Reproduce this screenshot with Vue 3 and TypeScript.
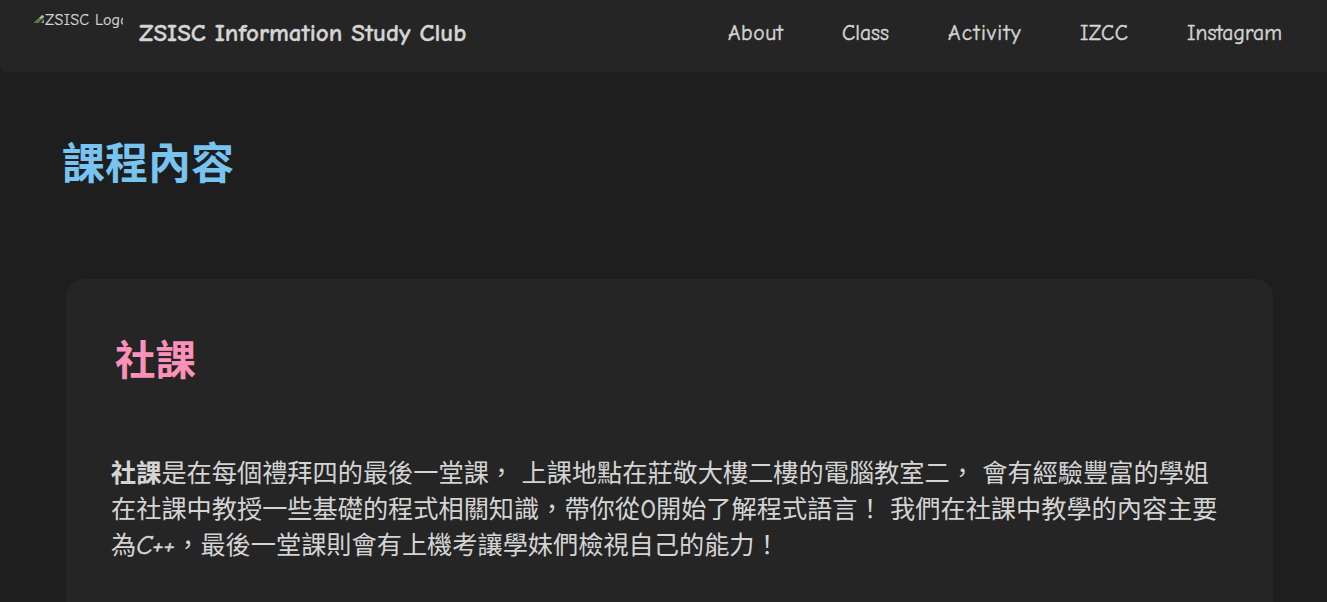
<script setup lang="ts">
interface NavLink {
  id: string
  label: string
}

const links: NavLink[] = [
  { id: 'about', label: 'About' },
  { id: 'class', label: 'Class' },
  { id: 'activity', label: 'Activity' },
  { id: 'izcc', label: 'IZCC' },
  { id: 'instagram', label: 'Instagram' },
]
</script>

<template>
  <div class="page">
    <header class="navbar">
      <div class="brand">
        <div class="logo">
          <svg class="logo-icon" viewBox="0 0 11 9" aria-hidden="true">
            <path d="M0 8 8 0l2 1v3L5 8z" fill="#a9b7b9" />
            <path d="M0 8 5 3l3 1-4 4z" fill="#587f32" />
            <path d="M4 8 10 2v2L6 8z" fill="#252525" />
            <path d="M7 8l3-4v4z" fill="#909995" />
          </svg>
          <span class="logo-alt">ZSISC Logo</span>
        </div>
        <span class="title">ZSISC Information Study Club</span>
      </div>
      <nav class="links">
        <a v-for="link in links" :key="link.id" :class="['link', link.id]">{{ link.label }}</a>
      </nav>
    </header>

    <main class="content">
      <h1>課程內容</h1>
      <section class="card">
        <h2>社課</h2>
        <p>
          <b>社課</b>是在每個禮拜四的最後一堂課，
          上課地點在莊敬大樓二樓的電腦教室二，
          會有經驗豐富的學姐<br />在社課中教授一些基礎的程式相關知識，帶你從<span class="zero">0</span>開始了解程式語言！
          我們在社課中教學的內容主要<br />為<span class="cpp">C++</span>，最後一堂課則會有上機考讓學妹們檢視自己的能力！
        </p>
      </section>
    </main>
  </div>
</template>

<style>
body {
  margin: 0;
  overflow: hidden;
  background: #1e1e1e;
}
</style>

<style scoped>
.page {
  height: 602px;
  overflow: hidden;
  background: #1e1e1e;
  color: #d4d4d4;
  font-family: "Comic Sans MS", "Comic Neue", "Noto Sans", "Noto Sans CJK TC", sans-serif;
}

.navbar {
  display: flex;
  justify-content: space-between;
  box-sizing: border-box;
  height: 72px;
  padding: 0 45px 0 34px;
  border-radius: 0 0 0 8px;
  background: #252525;
}

.brand,
.links {
  display: flex;
}

.logo {
  display: flex;
  width: 89px;
  height: 22px;
  margin: 9px 16px 0 0;
  overflow: hidden;
  font-size: 16px;
  line-height: 22px;
  letter-spacing: 0.25px;
  white-space: nowrap;
  -webkit-text-stroke: 0.2px #d4d4d4;
}

.logo-icon {
  flex: none;
  width: 11px;
  height: 9px;
  margin-top: 6px;
}

.title {
  padding-top: 17px;
  font-size: 25px;
  font-weight: 700;
  line-height: 32px;
  white-space: nowrap;
  -webkit-text-stroke: 0.3px #d4d4d4;
}

.links {
  gap: 59px;
  padding-top: 18px;
  font-size: 21.5px;
  line-height: 30px;
  -webkit-text-stroke: 0.45px #d4d4d4;
}

.link {
  white-space: nowrap;
}

.about {
  width: 55px;
  letter-spacing: 0.6px;
}

.class {
  width: 47px;
}

.activity {
  width: 73px;
  letter-spacing: 1.3px;
}

.izcc {
  width: 48px;
  letter-spacing: 0.4px;
}

.instagram {
  width: 95px;
  letter-spacing: 0.1px;
}

.content {
  padding: 57px 54px 0 62px;
}

h1,
h2,
p {
  margin: 0;
  font-family: "Noto Sans CJK TC", sans-serif;
}

h1 {
  color: #78c4f0;
  font-size: 43px;
  line-height: 62px;
}

.card {
  box-sizing: border-box;
  height: 400px;
  margin: 88px 0 0 4px;
  padding: 49px 40px 0 45px;
  border-radius: 18px;
  background: #252525;
}

h2 {
  padding-left: 4px;
  color: #fa91b9;
  font-size: 40.5px;
  line-height: 60px;
}

p {
  margin-top: 65px;
  font-size: 25.2px;
  line-height: 36px;
  word-spacing: 1.8px;
  white-space: nowrap;
}

.zero,
.cpp {
  display: inline-block;
  width: 16px;
  font-family: "Comic Sans MS", "Comic Neue", "Noto Sans", sans-serif;
  font-size: 27px;
  line-height: 30px;
  -webkit-text-stroke: 0.5px #d4d4d4;
}

.cpp {
  width: 39px;
  font-style: italic;
  letter-spacing: -0.7px;
}
</style>
